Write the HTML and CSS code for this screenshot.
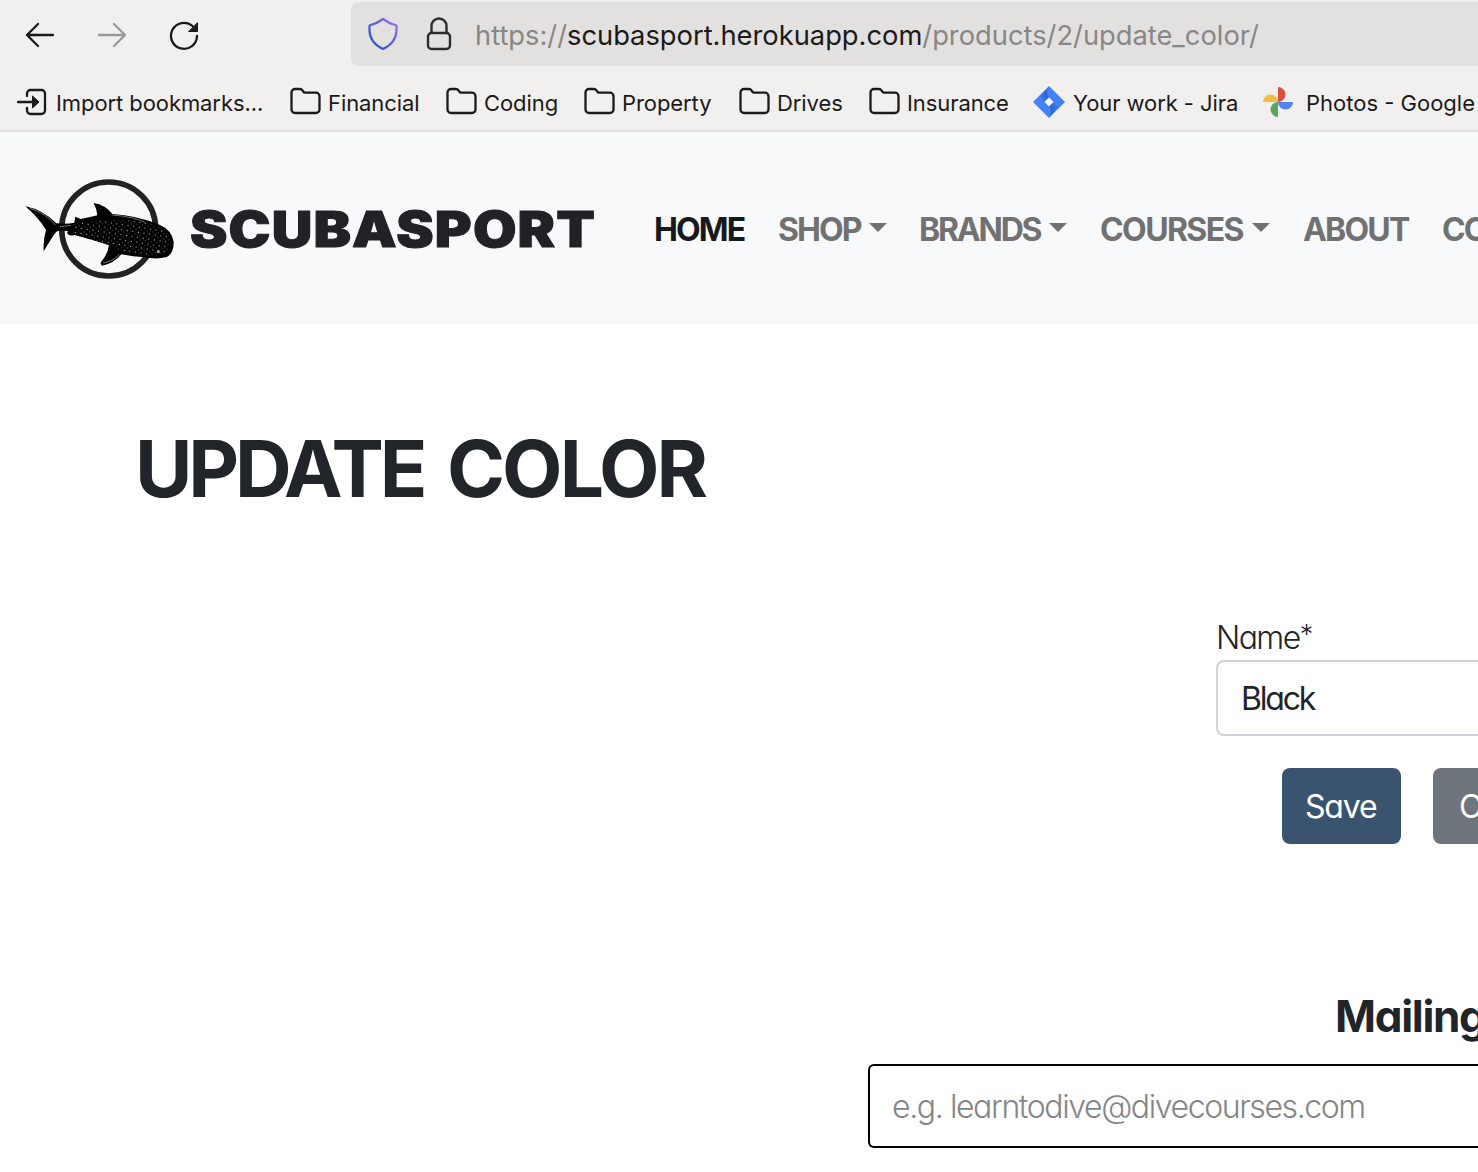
FILE: index.html
```html
<!DOCTYPE html>
<html lang="en">
<head>
<meta charset="utf-8">
<title>Update Color - Scubasport</title>
<link rel="stylesheet" href="styles.css">
</head>
<body>
<svg class="defs" aria-hidden="true">
  <symbol id="folder" viewBox="0 0 32 28"><path d="M2.500 5.500a3.500 3.500 0 0 1 3.500-3.500h5q1.500 0 2.300 1.200l.8 1.200q.8 1.300 2.300 1.300h10.600a3.500 3.500 0 0 1 3.500 3.500v13.300a3.500 3.500 0 0 1-3.500 3.500h-21a3.500 3.500 0 0 1-3.500-3.500z" fill="none" stroke="#1b1a18" stroke-width="2.300"/></symbol>
</svg>
<header class="browser">
  <div class="toolbar">
    <svg class="tool back" viewBox="0 0 32 32"><path d="M29 16H3M14 5 3 16l11 11" /></svg>
    <svg class="tool forward" viewBox="0 0 32 32"><path d="M3 16h26M18 5l11 11-11 11" /></svg>
    <svg class="tool reload" viewBox="0 0 32 32"><path d="M29 17a13 13 0 1 1-4.500-10"/><path class="solid" d="M29.500 4v8.500H21z"/></svg>
    <div class="urlbar">
      <svg class="shield" viewBox="0 0 32 34"><defs><linearGradient id="sg" x1="0" y1="1" x2="1" y2="0"><stop offset=".2" stop-color="#2f55cf"/><stop offset="1" stop-color="#9a70f5"/></linearGradient></defs><path d="M16 2q-6 4.500-13.500 6.500v5Q3 26 16 32 29 26 29.500 13.500v-5Q22 6.500 16 2z" fill="none" stroke="url(#sg)" stroke-width="2.200" stroke-linejoin="round"/></svg>
      <svg class="lock" viewBox="0 0 26 34"><path d="M5.500 16V9a7.500 7.500 0 0 1 15 0v7" /><rect x="2" y="16" width="22" height="16" rx="3.500"/></svg>
      <span class="url">https://<b>scubasport.herokuapp.com</b>/products/2/update_color/</span>
    </div>
  </div>
  <div class="bookmarks">
    <span class="bm import"><svg viewBox="0 0 30 28"><path d="M10 8V5.500a3.500 3.500 0 0 1 3.500-3.500h11a3.500 3.500 0 0 1 3.500 3.500v17a3.500 3.500 0 0 1-3.500 3.500h-11a3.500 3.500 0 0 1-3.500-3.500V20M1 14h18" fill="none" stroke="#1b1a18" stroke-width="2.300" stroke-linecap="round"/><path d="m15.500 8 6.500 6-6.500 6z" fill="#1b1a18" stroke="#1b1a18" stroke-linejoin="round"/></svg><span>Import bookmarks...</span></span>
    <span class="bm financial"><svg><use href="#folder"/></svg><span>Financial</span></span>
    <span class="bm coding"><svg><use href="#folder"/></svg><span>Coding</span></span>
    <span class="bm property"><svg><use href="#folder"/></svg><span>Property</span></span>
    <span class="bm drives"><svg><use href="#folder"/></svg><span>Drives</span></span>
    <span class="bm insurance"><svg><use href="#folder"/></svg><span>Insurance</span></span>
    <span class="bm jira"><svg viewBox="0 0 32 32"><defs><linearGradient id="ja" x1="1" y1="0" x2="0" y2="1"><stop offset="0" stop-color="#1d50bd"/><stop offset="1" stop-color="#4483f7"/></linearGradient><linearGradient id="jb" x1="0" y1="1" x2="1" y2="0"><stop offset="0" stop-color="#1d50bd"/><stop offset="1" stop-color="#4483f7"/></linearGradient></defs><path d="m16 0 16 16-16 16L0 16z" fill="#4483f7"/><path d="M15.500 1.500q-3 4-.5 8.500l1 1.500-4.500 4.500L7 11z" fill="url(#ja)"/><path d="M16.500 30.500q3-4 .5-8.500l-1-1.500 4.500-4.500L25 21z" fill="url(#jb)"/><path d="m16 11.500 4.500 4.500-4.500 4.500-4.500-4.500z" fill="#f8fbff"/></svg><span>Your work - Jira</span></span>
    <span class="bm photos"><svg viewBox="0 0 30 30"><path d="M15 15V0a7.500 7.500 0 0 1 0 15z" fill="#d95040"/><path d="M15 15h15a7.500 7.500 0 0 1-15 0z" fill="#5383ec"/><path d="M15 15v15a7.500 7.500 0 0 1 0-15z" fill="#58a55c"/><path d="M15 15H0a7.500 7.500 0 0 1 15 0z" fill="#f2bd42"/></svg><span>Photos - Google</span></span>
  </div>
</header>
<nav class="navbar">
  <svg class="mark" viewBox="0 0 540 390">
    <defs><pattern id="spots" width="17" height="15" patternUnits="userSpaceOnUse" patternTransform="rotate(9)"><circle cx="4" cy="4" r="1.700" fill="#ddd"/><circle cx="12" cy="11" r="1.400" fill="#aaa"/></pattern></defs>
    <circle cx="296" cy="192" r="141" fill="none" stroke="#222" stroke-width="17"/>
    <path d="M46 124Q98 134 139 175Q170 178 193 173L196 155L212 162Q235 158 262 151Q260 130 251 114Q285 119 307 147Q380 151 450 180Q485 195 491 230Q492 264 470 276Q440 284 405 277Q370 275 334 268Q312 296 276 302Q270 297 273 291Q292 270 297 241Q240 222 193 210Q178 215 171 204L174 198Q150 194 139 200Q128 213 101 259Q99 225 108 195Q84 156 46 124z"/>
    <path d="M190 178Q330 150 430 180Q480 195 482 230Q480 262 450 270Q370 270 315 250Q240 222 190 207z" fill="url(#spots)"/>
    <path d="M60 130Q108 145 136 180M307 150Q370 155 405 172M329 268Q308 289 280 294M150 185l32-4" fill="none" stroke="#aaa" stroke-width="2"/>
    <circle cx="445" cy="260" r="4" fill="#999" stroke="#eee"/>
  </svg>
  <svg class="wordmark" viewBox="0 0 406 60"><text x="0" y="47.500" textLength="406" lengthAdjust="spacingAndGlyphs">SCUBASPORT</text></svg>
  <div class="menu">
    <a class="home">HOME</a>
    <a class="shop drop">SHOP</a>
    <a class="brands drop">BRANDS</a>
    <a class="courses drop">COURSES</a>
    <a class="about">ABOUT</a>
    <a class="contact">CONTACT</a>
  </div>
</nav>
<main>
  <h1><span>UPDATE</span> COLOR</h1>
  <form class="color-form">
    <label for="name">Name<sup>*</sup></label>
    <div class="field"><span>Black</span></div>
    <div class="actions"><a class="btn save">Save</a><a class="btn cancel">Cancel</a></div>
  </form>
  <section class="mailing">
    <h2><span>Mailing</span></h2>
    <div class="email"><span>e.g. learntodive@divecourses.com</span></div>
  </section>
</main>
</body>
</html>
```
FILE: styles.css
```css
* { box-sizing: border-box; }
html, body { margin: 0; height: 1172px; overflow: hidden; background: #fff; }
body { font-family: "Inter", "Liberation Sans", sans-serif; color: #212529; }
svg { display: block; flex: none; }
.defs { width: 0; height: 0; position: absolute; }

.browser { height: 132px; background: #f1f0ee; border-bottom: 2px solid #e0e0df; }
.toolbar { height: 66px; padding: 2px 0 0 24px; display: flex; align-items: center; }
.tool { width: 32px; height: 32px; margin: 2px 40px 0 0; fill: none; stroke: #1b1a18; stroke-width: 2.3; stroke-linecap: round; stroke-linejoin: round; }
.tool .solid { fill: #1b1a18; stroke-width: 1; }
.forward { stroke: #9b9a98; }
.urlbar { margin-left: 111px; flex: 1; height: 64px; border-radius: 8px 0 0 8px; background: #e2e1df; display: flex; align-items: center; padding-left: 16px; white-space: nowrap; }
.shield { width: 32px; height: 34px; }
.lock { width: 26px; height: 34px; margin-left: 27px; fill: none; stroke: #2d2c2a; stroke-width: 2.4; }
.url { margin: 3px 0 0 23px; font-size: 27.3px; line-height: 40px; color: #888785; }
.url b { font-weight: 400; color: #1b1a18; }

.bookmarks { height: 64px; padding-left: 17px; display: flex; align-items: center; white-space: nowrap; font-size: 22px; line-height: 30px; letter-spacing: -0.08px; color: #1b1a18; }
.bm { display: flex; align-items: center; flex: none; gap: 7px; padding-top: 9px; }
.bm svg { width: 32px; height: 28px; margin-top: -3px; }
.import { width: 272px; gap: 9px; }
.bm.import svg { width: 30px; margin-top: -2px; }
.financial { width: 156px; }
.coding { width: 138px; }
.property { width: 155px; }
.drives { width: 130px; }
.insurance { width: 165px; }
.jira { width: 230px; gap: 8px; }
.bm.jira svg { height: 32px; margin-top: -2px; }
.photos { gap: 13px; letter-spacing: 0; }
.bm.photos svg { width: 30px; height: 30px; margin-top: -2px; }

.navbar { height: 192px; background: #f8f9fb; display: flex; align-items: center; padding-left: 10px; }
.mark { width: 180px; height: 130px; margin-top: 4px; }
.wordmark { width: 406px; height: 60px; margin-top: 2px; }
.wordmark text { font: 900 49px "Inter", sans-serif; letter-spacing: 1px; fill: #212226; stroke: #212226; stroke-width: 1; }
.menu { display: flex; margin: 3px 0 0 58px; font-size: 32px; font-weight: 700; line-height: 48px; letter-spacing: -1.9px; color: #717171; white-space: nowrap; }
.menu a { flex: none; display: flex; }
.menu .drop::after { content: ""; margin: 17px 0 0 auto; border: 9px solid transparent; border-top-color: #717171; border-bottom: 0; }
.menu .home { width: 124px; color: #18191a; }
.shop { width: 109px; margin-right: 32px; }
.brands { width: 148px; margin-right: 33px; letter-spacing: -2.2px; }
.courses { width: 170px; margin-right: 33px; letter-spacing: -1.6px; }
.about { width: 139px; letter-spacing: -1.8px; }

main { font-feature-settings: "cv11"; white-space: nowrap; }
h1 { margin: 96px 0 0 135px; font-size: 78.5px; line-height: 97px; font-weight: 700; letter-spacing: -2.9px; word-spacing: 8px; }
h1 span { letter-spacing: -4.2px; }
.color-form { margin: 101px 0 0 1216px; }
.color-form label { display: block; height: 42px; font-size: 32px; line-height: 40px; font-weight: 300; letter-spacing: -1.6px; }
sup { font-size: 27px; line-height: 0; vertical-align: 5px; }
.field { height: 76px; border: 2px solid #ced4da; border-right: 0; border-radius: 8px 0 0 8px; padding-left: 23px; font-size: 32px; line-height: 74px; letter-spacing: -2.2px; }
.actions { margin: 32px 0 0 66px; display: flex; gap: 32px; }
.btn { flex: none; height: 76px; border-radius: 8px; color: #fff; font-size: 32px; line-height: 78px; padding-left: 23px; letter-spacing: -1.2px; }
.save { width: 119px; background: #3a546f; }
.cancel { width: 144px; background: #6e757c; padding-left: 26px; }
.mailing { margin: 144px 0 0 868px; }
h2 { margin: 0 0 0 467px; font-size: 44px; line-height: 57px; font-weight: 700; letter-spacing: -1.3px; }
.email { margin-top: 19px; height: 84px; border: 2px solid #000; border-right: 0; border-radius: 6px 0 0 6px; padding-left: 22px; font-size: 32px; line-height: 81px; font-weight: 300; letter-spacing: -1.4px; color: #858687; }
```
